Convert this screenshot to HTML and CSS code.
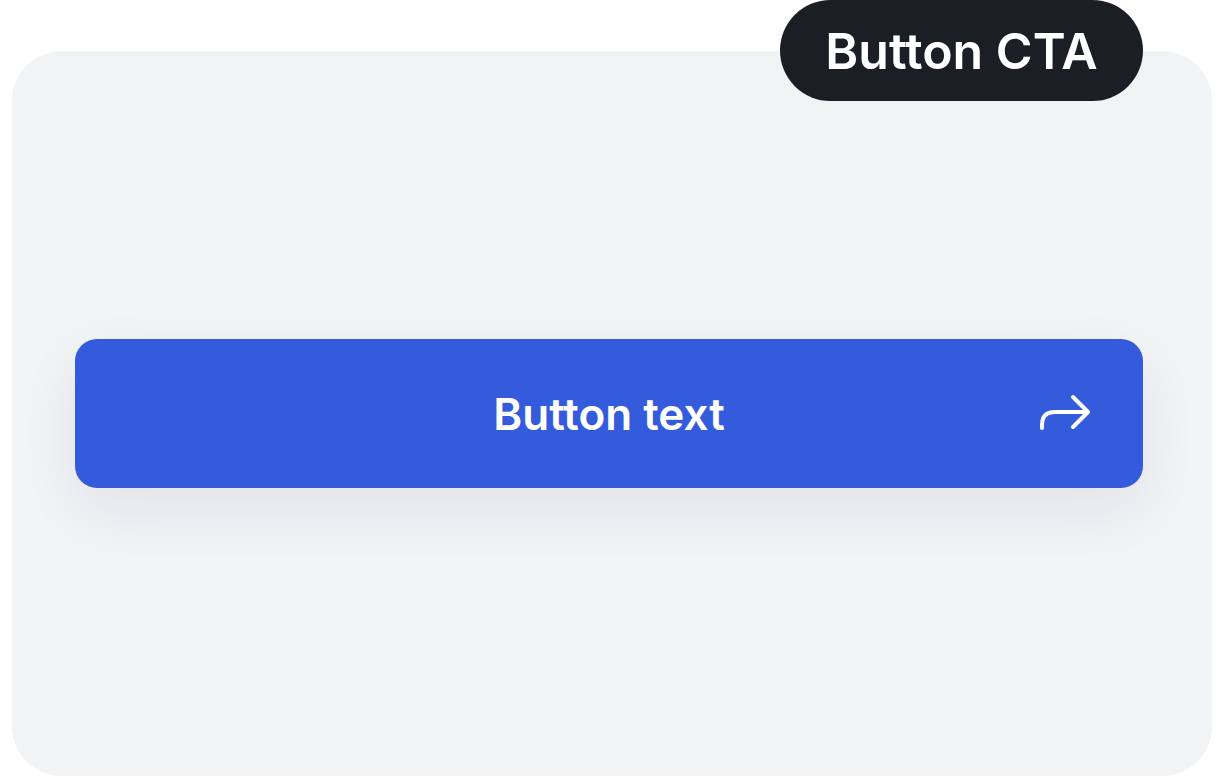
FILE: index.html
```html
<!DOCTYPE html>
<html>
<head>
<meta charset="utf-8">
<link rel="stylesheet" href="styles.css">
</head>
<body>
<div class="page">
  <div class="card">
    <button class="cta">
      <span class="spacer"></span>
      <span class="label">Button text</span>
      <span class="icon-cell">
        <svg class="icon" width="58" height="42" viewBox="0 0 58 42" fill="none" stroke="#ffffff" stroke-width="4" stroke-linecap="round" stroke-linejoin="round">
          <path d="M6 35 V32 Q6 19 19 19 H52 M37 4 L52 19 L37 34"/>
        </svg>
      </span>
    </button>
  </div>
  <div class="badge">Button CTA</div>
</div>
</body>
</html>
```
FILE: styles.css
```css
html, body {
  margin: 0;
  padding: 0;
  background: #ffffff;
}
.page {
  position: relative;
  width: 1218px;
  height: 777px;
  padding: 51px 0 0 12px;
  box-sizing: border-box;
  font-family: Inter, "Noto Sans", sans-serif;
}
.card {
  width: 1200px;
  height: 725px;
  background: #f2f3f5;
  border-radius: 50px;
  display: flex;
  align-items: center;
  padding-left: 63px;
  box-sizing: border-box;
}
.cta {
  width: 1068px;
  height: 149px;
  border: none;
  border-radius: 22px;
  background: #345bdb;
  box-shadow: 0 22px 60px rgba(20, 30, 60, 0.07);
  display: grid;
  grid-template-columns: 1fr auto 1fr;
  align-items: center;
  padding: 0;
  font-family: inherit;
  cursor: pointer;
}
.label {
  color: #ffffff;
  font-size: 44px;
  font-weight: 600;
  letter-spacing: 0;
}
.icon-cell {
  justify-self: end;
  padding-right: 49px;
  display: flex;
}
.badge {
  position: absolute;
  top: 0;
  left: 780px;
  width: 363px;
  height: 101px;
  border-radius: 51px;
  background: #1c1e26;
  color: #ffffff;
  font-size: 50px;
  font-weight: 600;
  display: flex;
  align-items: center;
  justify-content: center;
}
```
